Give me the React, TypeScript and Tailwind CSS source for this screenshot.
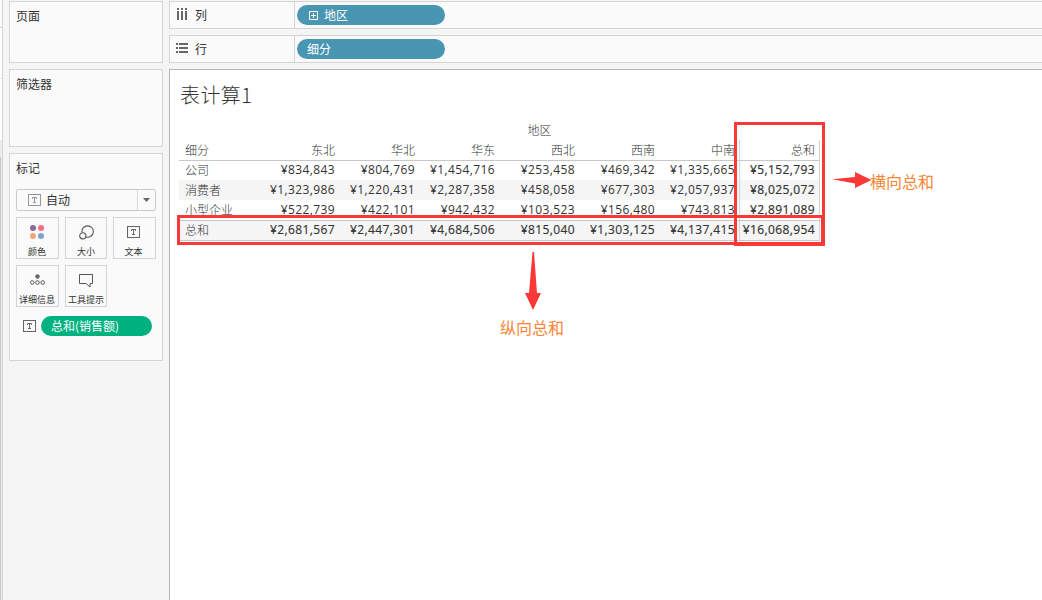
import { ReactNode } from "react";

const regions = ["东北", "华北", "华东", "西北", "西南", "中南"];

const rows = [
  {
    name: "公司",
    values: ["¥834,843", "¥804,769", "¥1,454,716", "¥253,458", "¥469,342", "¥1,335,665"],
    total: "¥5,152,793",
  },
  {
    name: "消费者",
    values: ["¥1,323,986", "¥1,220,431", "¥2,287,358", "¥458,058", "¥677,303", "¥2,057,937"],
    total: "¥8,025,072",
  },
  {
    name: "小型企业",
    values: ["¥522,739", "¥422,101", "¥942,432", "¥103,523", "¥156,480", "¥743,813"],
    total: "¥2,891,089",
  },
  {
    name: "总和",
    values: ["¥2,681,567", "¥2,447,301", "¥4,684,506", "¥815,040", "¥1,303,125", "¥4,137,415"],
    total: "¥16,068,954",
  },
];

const rowStyles = [
  "h-[19px] leading-[18px]",
  "h-5 leading-5 bg-[#f5f5f5]",
  "h-5 leading-5",
  "h-[21px] leading-[18px] border-y border-[#c8c8c8] bg-[#f5f5f5] [-webkit-text-stroke:0.15px]",
];

function TextIcon({ className = "text-[#666]" }: { className?: string }) {
  return (
    <svg width="13" height="12" viewBox="0 0 13 12" fill="none" stroke="currentColor" className={className}>
      <rect x="0.5" y="0.5" width="12" height="11" />
      <path d="M4.500 5V3.500h4V5M6.500 3.500v5M5 8.500h3" />
    </svg>
  );
}

function ColorIcon() {
  return (
    <svg width="14" height="14" viewBox="0 0 14 14">
      <circle cx="3" cy="3" r="3" fill="#85709b" />
      <circle cx="11" cy="3" r="3" fill="#fa6e7d" />
      <circle cx="3" cy="11" r="3" fill="#f5a57c" />
      <circle cx="11" cy="11" r="3" fill="#7ca3cd" />
    </svg>
  );
}

function SizeIcon() {
  return (
    <svg width="15" height="15" viewBox="0 0 15 15" fill="none" stroke="#555" strokeWidth="1.1">
      <path d="M3 7.500A5.700 5.700 0 1 1 7 12" />
      <circle cx="3.800" cy="10.800" r="3.100" />
    </svg>
  );
}

function DetailIcon() {
  return (
    <svg width="15" height="12" viewBox="0 0 15 12" fill="none" stroke="#555">
      <circle cx="7.500" cy="2.500" r="2.200" fill="#666" stroke="none" />
      <circle cx="2.300" cy="8.500" r="1.800" />
      <circle cx="7.500" cy="8.500" r="1.800" />
      <circle cx="12.700" cy="8.500" r="1.800" />
    </svg>
  );
}

function TooltipIcon() {
  return (
    <svg width="15" height="14" viewBox="0 0 15 14" fill="none" stroke="#555" className="mt-0.5">
      <path d="M1 .5h12.500v9H11v3.500L7 9.500H.5V.5z" />
    </svg>
  );
}

function Card({ title, className, children }: { title: string; className: string; children?: ReactNode }) {
  return (
    <section className={`border border-[#d4d4d4] bg-[#fafafa] px-1.5 ${className}`}>
      <h2 className="pt-[5px] text-xs leading-[18px]">{title}</h2>
      {children}
    </section>
  );
}

function MarkButton({ label, icon, className }: { label: string; icon: ReactNode; className: string }) {
  return (
    <button type="button" className={`flex h-[42px] flex-col items-center border border-[#d4d4d4] ${className}`}>
      <span className="flex h-7 shrink-0 items-center justify-center">{icon}</span>
      <span className="text-[9px] leading-3 whitespace-nowrap">{label}</span>
    </button>
  );
}

function Shelf({ label, icon, children }: { label: string; icon: ReactNode; children: ReactNode }) {
  return (
    <div className="flex h-7 border border-r-0 border-[#d4d4d4] bg-[#fafafa]">
      <div className="flex w-[125px] items-center gap-[7px] border-r border-[#d4d4d4] pl-1.5 text-xs">
        {icon}
        <span>{label}</span>
      </div>
      <div className="ml-0.5 mt-[3px] flex h-5 w-[148px] items-center gap-1.5 rounded-full bg-[#4996b2] pl-2.5 text-xs text-white">
        {children}
      </div>
    </div>
  );
}

function Sidebar() {
  return (
    <aside className="ml-1.5 w-[154px] shrink-0 space-y-1.5 pt-px">
      <Card title="页面" className="h-[62px]" />
      <Card title="筛选器" className="h-[78px]" />
      <Card title="标记" className="h-[208px]">
        <div className="mt-3 flex h-[22px] w-[140px] items-center rounded-[2px] border border-[#cacaca] pl-[11px] text-xs">
          <TextIcon className="text-[#999]" />
          <span className="ml-[5px]">自动</span>
          <span className="ml-auto flex h-full w-[18px] items-center justify-center border-l border-[#d9d9d9] pr-px">
            <svg width="7" height="4" viewBox="0 0 7 4" fill="#666">
              <path d="M0 0h7L3.500 4z" />
            </svg>
          </span>
        </div>
        <div className="mt-1.5 flex flex-wrap gap-1.5">
          <MarkButton className="w-[43px] pr-px" label="颜色" icon={<ColorIcon />} />
          <MarkButton className="w-[42px]" label="大小" icon={<SizeIcon />} />
          <MarkButton className="w-[43px] pr-0.5" label="文本" icon={<TextIcon />} />
          <MarkButton className="w-[43px] pr-px" label="详细信息" icon={<DetailIcon />} />
          <MarkButton className="w-[42px]" label="工具提示" icon={<TooltipIcon />} />
        </div>
        <div className="mt-[9px] flex items-center gap-[5px] pl-[7px]">
          <TextIcon />
          <span className="h-5 w-[111px] rounded-full bg-[#00b180] pl-2.5 text-xs leading-5 text-white">总和(销售额)</span>
        </div>
      </Card>
    </aside>
  );
}

function CrossTab() {
  return (
    <div className="ml-[9px] mt-2.5 w-[641px] font-['Open_Sans','Noto_Sans_CJK_SC',sans-serif] text-xs text-[#333]">
      <div className="h-5 pl-[80px] text-center font-light leading-[22px]">地区</div>
      <div className="flex h-[21px] border-b border-[#c8c8c8] font-light leading-[22px]">
        <span className="w-[77px] pl-1.5">细分</span>
        {regions.map((region) => (
          <span key={region} className="w-20 pr-px text-right">{region}</span>
        ))}
        <span className="ml-[3px] w-[81px] border-x border-[#d4d4d4] pr-1 text-right">总和</span>
      </div>
      {rows.map((row, i) => (
        <div key={row.name} className={`flex ${rowStyles[i]}`}>
          <span className="w-[77px] pt-px pl-1.5 font-light [-webkit-text-stroke:0px]">{row.name}</span>
          {row.values.map((value, j) => (
            <span key={j} className="w-20 pr-px text-right tracking-[0.4px]">{value}</span>
          ))}
          <span className="ml-[3px] w-[81px] border-x border-[#d4d4d4] pr-1 text-right tracking-[0.4px] [-webkit-text-stroke:0.2px]">
            {row.total}
          </span>
        </div>
      ))}
    </div>
  );
}

export default function App() {
  return (
    <div className="relative flex h-[600px] w-[1042px] overflow-hidden bg-[#f5f5f5] font-['Noto_Sans_CJK_SC',sans-serif] text-[#333]">
      <div className="flex w-[3px] shrink-0 flex-col border-r border-[#d4d4d4]">
        <div className="h-7 border-b border-[#d4d4d4] bg-[#fafafa]" />
        <div className="h-[51px] border-b border-[#e6e6e6] bg-white" />
        <div className="h-[61px] bg-white" />
        <div className="h-[17px] bg-[#ececec]" />
        <div className="grow border-l border-[#c8c8c8] bg-[#ececec]" />
      </div>
      <Sidebar />
      <main className="ml-1.5 flex min-w-0 grow flex-col gap-1.5 pt-px">
        <Shelf
          label="列"
          icon={
            <svg width="12" height="12" viewBox="0 0 12 12" fill="#666" className="mb-0.5">
              <path d="M1 0h2v2H1zM5 0h2v2H5zM9 0h2v2H9zM1 3h2v9H1zM5 3h2v9H5zM9 3h2v9H9z" />
            </svg>
          }
        >
          <svg width="9" height="9" viewBox="0 0 9 9" fill="none" stroke="white" className="ml-0.5">
            <path d="M.5.5h8v8h-8zM2 4.500h5M4.500 2v5" />
          </svg>
          <span>地区</span>
        </Shelf>
        <Shelf
          label="行"
          icon={
            <svg width="12" height="10" viewBox="0 0 12 10" fill="#666" className="mb-0.5">
              <path d="M0 0h2v2H0zM0 4h2v2H0zM0 8h2v2H0zM3 0h9v2H3zM3 4h9v2H3zM3 8h9v2H3z" />
            </svg>
          }
        >
          <span>细分</span>
        </Shelf>
        <div className="grow border-l border-t border-[#b4b4b4] bg-white">
          <h1 className="ml-2.5 mt-2.5 text-xl font-light leading-[30px] tracking-[0.4px]">表计算1</h1>
          <CrossTab />
        </div>
      </main>

      {/* callouts drawn over the sheet */}
      <div className="absolute left-[177px] top-[215px] h-[30px] w-[647px] border-3 border-[#fb3838]" />
      <div className="absolute left-[734px] top-[122px] h-[124px] w-[91px] border-3 border-[#fb3838]" />
      <svg className="absolute left-[832px] top-[172px]" width="40" height="16" viewBox="0 0 40 16" fill="#fb3838">
        <path d="M0 7.300 23 5V0l16.500 8L23 16v-4.500z" />
      </svg>
      <svg className="absolute left-[525px] top-[252px]" width="16" height="58" viewBox="0 0 16 58" fill="#fb3838">
        <path d="M7.500 0h1.500L12 41h4L8 58 0 41h4z" />
      </svg>
      <span className="absolute left-[870px] top-[169px] text-base leading-6 text-[#f98532]">横向总和</span>
      <span className="absolute left-[500px] top-[315px] text-base leading-6 text-[#f98532]">纵向总和</span>
    </div>
  );
}
